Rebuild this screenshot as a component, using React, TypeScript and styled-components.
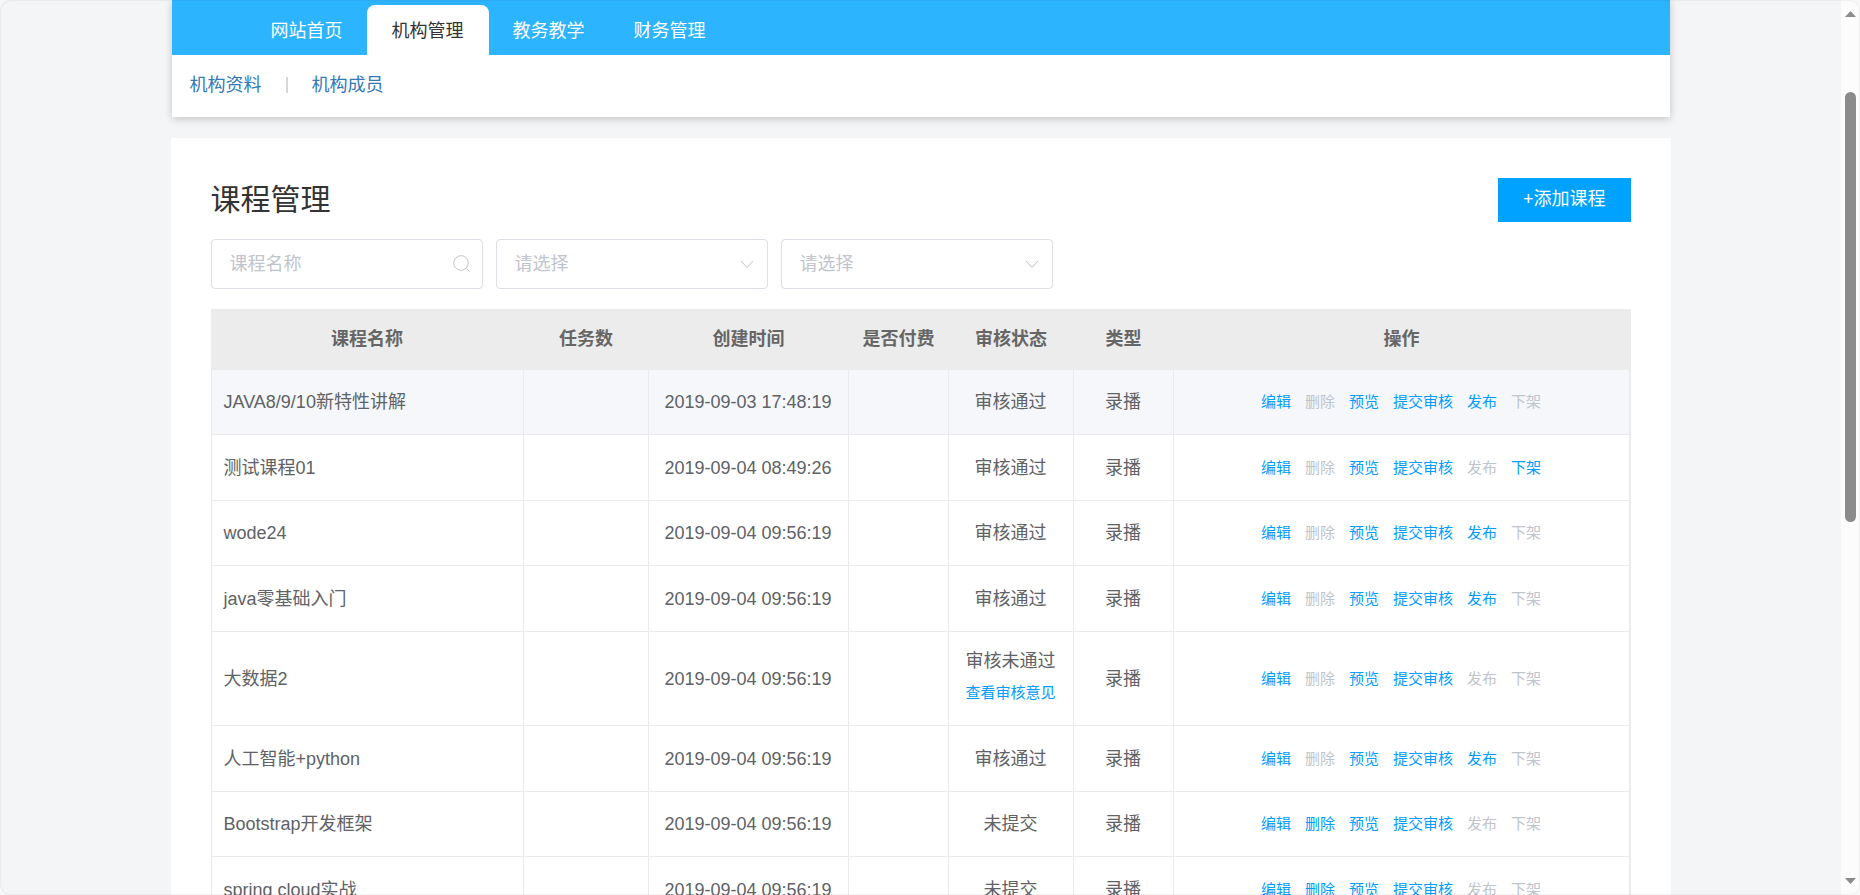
import React from 'react';
import styled, { createGlobalStyle } from 'styled-components';

const GlobalStyle = createGlobalStyle`
  *, *::before, *::after { box-sizing: border-box; }
  body {
    margin: 0;
    background: #f7f7f7;
    color: #606266;
    font-family: "Liberation Sans", "Noto Sans CJK SC", sans-serif;
    font-size: 18px;
    font-weight: 400;
  }
  button, input, select { font: inherit; }
  a { text-decoration: none; }
`;

const Frame = styled.div`
  position: relative;
  display: flex;
  height: 100vh;
  overflow: hidden;
  border-radius: 10px;
  background: #f3f5f7;

  &::after {
    content: '';
    position: absolute;
    inset: 0;
    border-radius: 10px;
    box-shadow: inset 0 0 2px rgba(0, 0, 0, 0.16);
    pointer-events: none;
  }
`;

const Viewport = styled.div`
  flex: 1;
  min-width: 0;
  overflow-y: auto;
  scrollbar-width: none;
`;

const Container = styled.div`
  max-width: 1500px;
  margin: 0 auto;
`;

const Header = styled.header`
  margin: 0 1px 21px;
  background: #fff;
  box-shadow: 0 2px 8px rgba(0, 0, 0, 0.2);
`;

const MainNav = styled.nav`
  display: flex;
  padding: 5px 0 0 75px;
  background: #2db4ff;
`;

const NavTab = styled.a<{ $active?: boolean }>`
  margin-left: -1px;
  padding: 2px 25px 0;
  border-radius: 8px 8px 0 0;
  line-height: 48px;
  color: ${({ $active }) => ($active ? '#333' : '#fff')};
  background: ${({ $active }) => ($active ? '#fff' : 'transparent')};
`;

const SubNav = styled.nav`
  display: flex;
  align-items: center;
  gap: 24px;
  padding: 16px 18px 18px;
`;

const SubLink = styled.a`
  line-height: 28px;
  color: #337ab7;
`;

const Divider = styled.span`
  width: 2px;
  height: 16px;
  background: #d8d8d8;
`;

const Card = styled.main`
  padding: 40px;
  background: #fff;
`;

const TitleRow = styled.div`
  display: flex;
  align-items: center;
  justify-content: space-between;
  margin-bottom: 17px;
`;

const Title = styled.h1`
  margin: 0;
  font-size: 30px;
  font-weight: 400;
  line-height: 44px;
  color: #333;
`;

const AddButton = styled.button`
  padding: 0 25px 2px;
  border: 0;
  line-height: 42px;
  color: #fff;
  background: #00a2ff;
  cursor: pointer;
`;

const Filters = styled.form`
  display: flex;
  gap: 13px;
  margin-bottom: 20px;
`;

const Field = styled.label`
  position: relative;
  width: 272px;

  svg {
    position: absolute;
    top: 0;
    right: 12px;
    height: 100%;
    fill: none;
    stroke: #c0c4cc;
    pointer-events: none;
  }
`;

const control = `
  display: block;
  width: 100%;
  height: 50px;
  padding: 0 40px 0 18px;
  border: 1px solid #dcdfe6;
  border-radius: 4px;
  background: #fff;
  outline: none;
  appearance: none;
`;

const TextInput = styled.input`
  ${control}
  color: #606266;
  &::placeholder { color: #c0c4cc; opacity: 1; }
`;

const Select = styled.select`
  ${control}
  color: #c0c4cc;
`;

const CourseTable = styled.table`
  width: 100%;
  table-layout: fixed;
  border-collapse: separate;
  border-spacing: 0;
  border-right: 1px solid #ebebeb;
  text-align: center;
`;

const Column = styled.col<{ $width?: number }>`
  width: ${({ $width }) => ($width ? `${$width}px` : 'auto')};
`;

const HeadCell = styled.th`
  height: 61px;
  padding: 0 0 5px;
  font-weight: 700;
  color: #666;
  background: #ececec;
`;

const Row = styled.tr<{ $highlighted?: boolean }>`
  height: 65px;
  background: ${({ $highlighted }) => ($highlighted ? '#f5f7fb' : '#fff')};
  &:nth-child(even) { height: 66px; }
`;

const Cell = styled.td`
  padding: 14px 0;
  border-right: 1px solid #ebebeb;
  border-bottom: 1px solid #ebebeb;
  line-height: 30px;

  &:first-child {
    padding-left: 12px;
    border-left: 1px solid #ebebeb;
    text-align: left;
  }
`;

const ReviewLink = styled.a`
  display: block;
  margin-top: 2px;
  padding-bottom: 3px;
  font-size: 15px;
  color: #009dff;
`;

const Actions = styled.div`
  display: flex;
  justify-content: center;
  gap: 14px;
`;

const Action = styled.button`
  padding: 0;
  border: 0;
  background: none;
  font-size: 15px;
  color: #009dff;
  cursor: pointer;
  &:disabled { color: #c0c4cc; cursor: default; }
`;

const ScrollTrack = styled.div`
  display: flex;
  flex-direction: column;
  align-items: center;
  justify-content: space-between;
  width: 19px;
  padding: 11px 0;
  background: #fcfcfc;

  svg { display: block; fill: #8b8b8b; }
`;

const ScrollBody = styled.div`
  flex: 1;
  padding-top: 75px;
`;

const ScrollThumb = styled.div`
  width: 11px;
  height: 430px;
  border-radius: 6px;
  background: #8b8b8b;
`;

const NAV = ['网站首页', '机构管理', '教务教学', '财务管理'];

const COLUMNS: { label: string; width?: number }[] = [
  { label: '课程名称', width: 313 },
  { label: '任务数', width: 125 },
  { label: '创建时间', width: 200 },
  { label: '是否付费', width: 100 },
  { label: '审核状态', width: 125 },
  { label: '类型', width: 100 },
  { label: '操作' },
];

const ACTIONS = ['编辑', '删除', '预览', '提交审核', '发布', '下架'];

interface Course {
  name: string;
  created: string;
  status: string;
  disabled: string[];
}

const COURSES: Course[] = [
  { name: 'JAVA8/9/10新特性讲解', created: '2019-09-03 17:48:19', status: '审核通过', disabled: ['删除', '下架'] },
  { name: '测试课程01', created: '2019-09-04 08:49:26', status: '审核通过', disabled: ['删除', '发布'] },
  { name: 'wode24', created: '2019-09-04 09:56:19', status: '审核通过', disabled: ['删除', '下架'] },
  { name: 'java零基础入门', created: '2019-09-04 09:56:19', status: '审核通过', disabled: ['删除', '下架'] },
  { name: '大数据2', created: '2019-09-04 09:56:19', status: '审核未通过', disabled: ['删除', '发布', '下架'] },
  { name: '人工智能+python', created: '2019-09-04 09:56:19', status: '审核通过', disabled: ['删除', '下架'] },
  { name: 'Bootstrap开发框架', created: '2019-09-04 09:56:19', status: '未提交', disabled: ['发布', '下架'] },
  { name: 'spring cloud实战', created: '2019-09-04 09:56:19', status: '未提交', disabled: ['发布', '下架'] },
];

const SearchIcon = () => (
  <svg width="18" viewBox="0 0 18 18" aria-hidden="true">
    <circle cx="8" cy="8" r="7.3" />
    <path d="M13.2 13.2L16.5 16.5" />
  </svg>
);

const ChevronIcon = () => (
  <svg width="18" viewBox="0 0 18 18" aria-hidden="true">
    <path d="M3 6L9 12.5L15 6" />
  </svg>
);

const ChoiceField = ({ label }: { label: string }) => (
  <Field>
    <Select aria-label={label} defaultValue="">
      <option value="">请选择</option>
    </Select>
    <ChevronIcon />
  </Field>
);

const CourseRow = ({ course, highlighted }: { course: Course; highlighted: boolean }) => (
  <Row $highlighted={highlighted}>
    <Cell>{course.name}</Cell>
    <Cell />
    <Cell>{course.created}</Cell>
    <Cell />
    <Cell>
      {course.status}
      {course.status === '审核未通过' && <ReviewLink href="#review">查看审核意见</ReviewLink>}
    </Cell>
    <Cell>录播</Cell>
    <Cell>
      <Actions>
        {ACTIONS.map((action) => (
          <Action key={action} type="button" disabled={course.disabled.includes(action)}>
            {action}
          </Action>
        ))}
      </Actions>
    </Cell>
  </Row>
);

export default function App() {
  return (
    <>
      <GlobalStyle />
      <Frame>
        <Viewport>
          <Container>
            <Header>
              <MainNav>
                {NAV.map((item) => (
                  <NavTab key={item} href="#nav" $active={item === '机构管理'}>
                    {item}
                  </NavTab>
                ))}
              </MainNav>
              <SubNav>
                <SubLink href="#profile">机构资料</SubLink>
                <Divider />
                <SubLink href="#members">机构成员</SubLink>
              </SubNav>
            </Header>
            <Card>
              <TitleRow>
                <Title>课程管理</Title>
                <AddButton type="button">+添加课程</AddButton>
              </TitleRow>
              <Filters>
                <Field>
                  <TextInput type="text" placeholder="课程名称" aria-label="课程名称" />
                  <SearchIcon />
                </Field>
                <ChoiceField label="审核状态" />
                <ChoiceField label="类型" />
              </Filters>
              <CourseTable>
                <colgroup>
                  {COLUMNS.map((column) => (
                    <Column key={column.label} $width={column.width} />
                  ))}
                </colgroup>
                <thead>
                  <tr>
                    {COLUMNS.map((column) => (
                      <HeadCell key={column.label} scope="col">
                        {column.label}
                      </HeadCell>
                    ))}
                  </tr>
                </thead>
                <tbody>
                  {COURSES.map((course, index) => (
                    <CourseRow key={course.name} course={course} highlighted={index === 0} />
                  ))}
                </tbody>
              </CourseTable>
            </Card>
          </Container>
        </Viewport>
        <ScrollTrack aria-hidden="true">
          <svg width="11" height="6" viewBox="0 0 11 6">
            <path d="M5.5 0L11 6H0Z" />
          </svg>
          <ScrollBody>
            <ScrollThumb />
          </ScrollBody>
          <svg width="11" height="6" viewBox="0 0 11 6">
            <path d="M0 0H11L5.5 6Z" />
          </svg>
        </ScrollTrack>
      </Frame>
    </>
  );
}
